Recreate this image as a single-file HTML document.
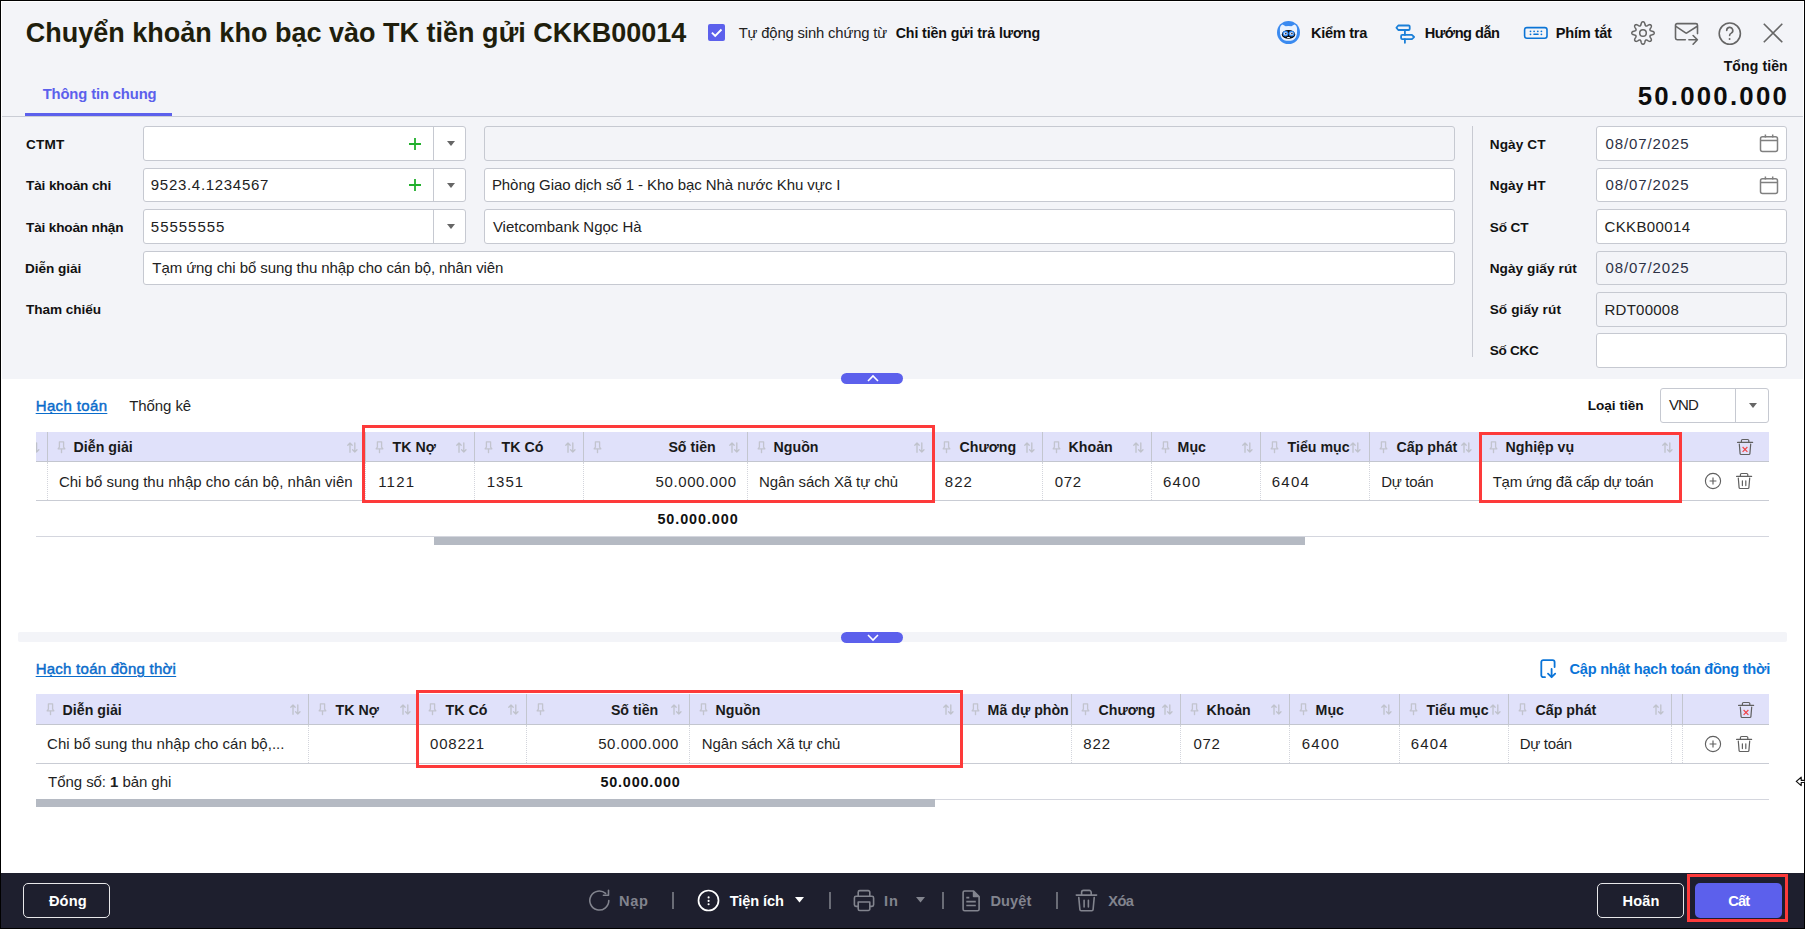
<!DOCTYPE html>
<html><head><meta charset="utf-8"><title>Chuyển khoản kho bạc</title>
<style>
html,body{margin:0;padding:0;width:1805px;height:929px;overflow:hidden;background:#000}
body{position:relative;font-family:"Liberation Sans", sans-serif}
.t{position:absolute;white-space:nowrap;font-family:"Liberation Sans", sans-serif}
svg{overflow:visible}
</style></head><body>
<div style="position:absolute;left:0px;top:0px;width:1805px;height:929px;background:#000"></div>
<div style="position:absolute;left:1px;top:1px;width:1803px;height:927px;background:#fff"></div>
<div style="position:absolute;left:2px;top:2px;width:1801px;height:377px;background:#f3f4f8"></div>
<div class="t" style="left:25.70px;top:18px;font-size:27px;line-height:30px;font-weight:bold;color:#201e0c;letter-spacing:0.011px;">Chuyển khoản kho bạc vào TK tiền gửi CKKB00014</div>
<div style="position:absolute;left:708px;top:24px;width:17px;height:17px;background:#5c60ec;border-radius:2px"></div>
<svg style="position:absolute;left:708px;top:24px" width="17" height="17" viewBox="0 0 17 17"><path d="M3.9 8.6 L7.2 11.9 L13.5 5.5" fill="none" stroke="#fff" stroke-width="1.9"/></svg>
<div class="t" style="left:738.70px;top:18px;font-size:14.8px;line-height:30px;font-weight:normal;color:#222;letter-spacing:-0.150px;">Tự động sinh chứng từ</div>
<div class="t" style="left:895.70px;top:18px;font-size:14.2px;line-height:30px;font-weight:bold;color:#111;letter-spacing:-0.095px;">Chi tiền gửi trả lương</div>
<svg style="position:absolute;left:1277px;top:21px" width="23" height="23" viewBox="0 0 23 23"><circle cx="11.5" cy="11.5" r="11.5" fill="#3a8af0"/><path d="M2.9 10 Q2.6 4.2 5.6 3.6 L8.6 5.3 Q11.5 4.7 14.4 5.3 L17.4 3.6 Q20.4 4.2 20.1 10 Q20.3 16.8 15.8 19.2 Q11.5 20.4 7.2 19.2 Q2.7 16.8 2.9 10 Z" fill="#e9f2fe"/><ellipse cx="11.5" cy="13.4" rx="6.7" ry="4.4" fill="#0a0a0a"/><circle cx="8.5" cy="12.6" r="2.9" fill="#2d86f2"/><circle cx="14.6" cy="12.6" r="2.9" fill="#2d86f2"/><circle cx="8.5" cy="12.6" r="1.7" fill="#dfe8f5"/><circle cx="14.6" cy="12.6" r="1.7" fill="#dfe8f5"/><circle cx="8.8" cy="12.6" r="0.8" fill="#1a1a2a"/><circle cx="14.9" cy="12.6" r="0.8" fill="#1a1a2a"/><path d="M10.2 15.9 h2.6 v1.1 h-2.6z" fill="#fff"/></svg>
<div class="t" style="left:1310.90px;top:18px;font-size:14.6px;line-height:30px;font-weight:bold;color:#111;letter-spacing:-0.271px;">Kiểm tra</div>
<svg style="position:absolute;left:1394px;top:23px" width="22" height="22" viewBox="0 0 22 22"><g fill="none" stroke="#1a7fd8" stroke-width="1.8" stroke-linejoin="round" stroke-linecap="round"><path d="M4.3 2.5 H14.6 a1.1 1.1 0 0 1 1.1 1.1 V5.9 a1.1 1.1 0 0 1-1.1 1.1 H4.3 L2.4 4.75 Z"/><path d="M8.2 11.9 H17.9 L20.1 14 L17.9 16.1 H8.2 a1.1 1.1 0 0 1-1.1-1.1 V13 a1.1 1.1 0 0 1 1.1-1.1 Z"/><path d="M10.9 7 V11.9 M10.9 16.1 V19.8"/></g></svg>
<div class="t" style="left:1424.70px;top:18px;font-size:14.6px;line-height:30px;font-weight:bold;color:#111;letter-spacing:-0.500px;">Hướng dẫn</div>
<svg style="position:absolute;left:1523px;top:26px" width="26" height="14" viewBox="0 0 26 14"><rect x="1.6" y="1.6" width="22.4" height="10.6" rx="2.2" fill="none" stroke="#0b74d6" stroke-width="1.6"/><g fill="#0b74d6"><circle cx="7.5" cy="5.3" r="0.9"/><circle cx="11.1" cy="5.3" r="0.9"/><circle cx="14.8" cy="5.3" r="0.9"/><circle cx="18.4" cy="5.3" r="0.9"/><circle cx="7.5" cy="8.3" r="0.9"/><circle cx="18.4" cy="8.3" r="0.9"/><rect x="10.2" y="7.5" width="5.6" height="1.6" rx="0.8"/></g></svg>
<div class="t" style="left:1555.70px;top:18px;font-size:14.6px;line-height:30px;font-weight:bold;color:#111;letter-spacing:-0.186px;">Phím tắt</div>
<svg style="position:absolute;left:1629.8px;top:20.4px" width="26" height="26" viewBox="0 0 26 26"><g fill="none" stroke="#666" stroke-width="1.5" stroke-linejoin="round"><path d="M13.00 1.80 L13.44 1.85 L13.86 2.03 L14.26 2.39 L14.59 2.99 L14.83 3.78 L15.02 4.58 L15.20 5.19 L15.41 5.58 L15.65 5.83 L15.91 5.98 L16.20 6.06 L16.54 6.05 L16.97 5.92 L17.53 5.61 L18.22 5.18 L18.96 4.80 L19.61 4.61 L20.14 4.64 L20.57 4.81 L20.92 5.08 L21.19 5.43 L21.36 5.86 L21.39 6.39 L21.20 7.04 L20.82 7.78 L20.39 8.47 L20.08 9.03 L19.95 9.46 L19.94 9.80 L20.02 10.09 L20.17 10.35 L20.42 10.59 L20.81 10.80 L21.42 10.98 L22.22 11.17 L23.01 11.41 L23.61 11.74 L23.97 12.14 L24.15 12.56 L24.20 13.00 L24.15 13.44 L23.97 13.86 L23.61 14.26 L23.01 14.59 L22.22 14.83 L21.42 15.02 L20.81 15.20 L20.42 15.41 L20.17 15.65 L20.02 15.91 L19.94 16.20 L19.95 16.54 L20.08 16.97 L20.39 17.53 L20.82 18.22 L21.20 18.96 L21.39 19.61 L21.36 20.14 L21.19 20.57 L20.92 20.92 L20.57 21.19 L20.14 21.36 L19.61 21.39 L18.96 21.20 L18.22 20.82 L17.53 20.39 L16.97 20.08 L16.54 19.95 L16.20 19.94 L15.91 20.02 L15.65 20.17 L15.41 20.42 L15.20 20.81 L15.02 21.42 L14.83 22.22 L14.59 23.01 L14.26 23.61 L13.86 23.97 L13.44 24.15 L13.00 24.20 L12.56 24.15 L12.14 23.97 L11.74 23.61 L11.41 23.01 L11.17 22.22 L10.98 21.42 L10.80 20.81 L10.59 20.42 L10.35 20.17 L10.09 20.02 L9.80 19.94 L9.46 19.95 L9.03 20.08 L8.47 20.39 L7.78 20.82 L7.04 21.20 L6.39 21.39 L5.86 21.36 L5.43 21.19 L5.08 20.92 L4.81 20.57 L4.64 20.14 L4.61 19.61 L4.80 18.96 L5.18 18.22 L5.61 17.53 L5.92 16.97 L6.05 16.54 L6.06 16.20 L5.98 15.91 L5.83 15.65 L5.58 15.41 L5.19 15.20 L4.58 15.02 L3.78 14.83 L2.99 14.59 L2.39 14.26 L2.03 13.86 L1.85 13.44 L1.80 13.00 L1.85 12.56 L2.03 12.14 L2.39 11.74 L2.99 11.41 L3.78 11.17 L4.58 10.98 L5.19 10.80 L5.58 10.59 L5.83 10.35 L5.98 10.09 L6.06 9.80 L6.05 9.46 L5.92 9.03 L5.61 8.47 L5.18 7.78 L4.80 7.04 L4.61 6.39 L4.64 5.86 L4.81 5.43 L5.08 5.08 L5.43 4.81 L5.86 4.64 L6.39 4.61 L7.04 4.80 L7.78 5.18 L8.47 5.61 L9.03 5.92 L9.46 6.05 L9.80 6.06 L10.09 5.98 L10.35 5.83 L10.59 5.58 L10.80 5.19 L10.98 4.58 L11.17 3.78 L11.41 2.99 L11.74 2.39 L12.14 2.03 L12.56 1.85Z"/><circle cx="13" cy="13" r="3.3"/></g></svg>
<svg style="position:absolute;left:1673px;top:21px" width="27" height="25" viewBox="0 0 27 25"><g fill="none" stroke="#666" stroke-width="1.6" stroke-linecap="round" stroke-linejoin="round"><path d="M12.3 18.7 H4.1 a1.6 1.6 0 0 1-1.6-1.6 V4.2 a1.6 1.6 0 0 1 1.6-1.6 H22.9 a1.6 1.6 0 0 1 1.6 1.6 V12.6"/><path d="M2.9 5.4 L12.6 11.9 a1.2 1.2 0 0 0 1.3 0 L23.9 5.5"/><path d="M15.9 18.7 H24.4 M20.1 14.5 L24.4 18.7 L20.1 23.2"/></g></svg>
<svg style="position:absolute;left:1717px;top:21px" width="26" height="26" viewBox="0 0 26 26"><g fill="none" stroke="#666" stroke-width="1.6" stroke-linecap="round"><circle cx="12.8" cy="12.6" r="10.6"/><path d="M9.7 9.4 a3.05 3.05 0 1 1 4.5 2.7 c-0.9 0.45-1.5 1.1-1.6 2.3"/></g><circle cx="12.6" cy="18" r="0.95" fill="#666"/></svg>
<svg style="position:absolute;left:1762px;top:22px" width="22" height="22" viewBox="0 0 22 22"><path d="M1.8 1.8 L20.3 20.3 M20.3 1.8 L1.8 20.3" stroke="#666" stroke-width="1.6" fill="none"/></svg>
<div class="t" style="left:1723.70px;top:51px;font-size:14px;line-height:30px;font-weight:bold;color:#111;letter-spacing:0.125px;">Tổng tiền</div>
<div class="t" style="left:1637.70px;top:81px;font-size:25.8px;line-height:30px;font-weight:bold;color:#0d0d0d;letter-spacing:2.222px;">50.000.000</div>
<div class="t" style="left:42.70px;top:79px;font-size:14.8px;line-height:30px;font-weight:bold;color:#5c60ec;letter-spacing:-0.143px;">Thông tin chung</div>
<div style="position:absolute;left:25px;top:113px;width:147px;height:3px;background:#5c60ec"></div>
<div style="position:absolute;left:2px;top:116px;width:1801px;height:1px;background:#cacdd5"></div>
<div class="t" style="left:26.00px;top:130px;font-size:13.6px;line-height:30px;font-weight:bold;color:#111;letter-spacing:0.167px;">CTMT</div>
<div class="t" style="left:26.00px;top:171px;font-size:13.6px;line-height:30px;font-weight:bold;color:#111;letter-spacing:-0.133px;">Tài khoản chi</div>
<div class="t" style="left:26.00px;top:213px;font-size:13.6px;line-height:30px;font-weight:bold;color:#111;letter-spacing:-0.169px;">Tài khoản nhận</div>
<div class="t" style="left:25.00px;top:254px;font-size:13.6px;line-height:30px;font-weight:bold;color:#111;letter-spacing:-0.050px;">Diễn giải</div>
<div class="t" style="left:26.00px;top:295px;font-size:13.6px;line-height:30px;font-weight:bold;color:#111;letter-spacing:-0.044px;">Tham chiếu</div>
<div style="position:absolute;left:143px;top:126px;width:323px;height:35px;box-sizing:border-box;border:1px solid #c6c9d1;border-radius:3px;background:#fff"></div>
<div style="position:absolute;left:433px;top:127px;width:1px;height:33px;background:#c6c9d1"></div>
<svg style="position:absolute;left:409px;top:138px" width="12" height="12" viewBox="0 0 12 12"><path d="M6 0 V12 M0 6 H12" stroke="#22b02d" stroke-width="1.8"/></svg>
<svg style="position:absolute;left:446.5px;top:141.0px" width="8" height="5" viewBox="0 0 8 5"><path d="M0 0 H8 L4.0 5Z" fill="#666"/></svg>
<div style="position:absolute;left:484px;top:126px;width:971px;height:35px;box-sizing:border-box;border:1px solid #c6c9d1;border-radius:3px;background:#f3f4f8"></div>
<div style="position:absolute;left:143px;top:168px;width:323px;height:34px;box-sizing:border-box;border:1px solid #c6c9d1;border-radius:3px;background:#fff"></div>
<div style="position:absolute;left:433px;top:169px;width:1px;height:32px;background:#c6c9d1"></div>
<svg style="position:absolute;left:409px;top:179px" width="12" height="12" viewBox="0 0 12 12"><path d="M6 0 V12 M0 6 H12" stroke="#22b02d" stroke-width="1.8"/></svg>
<svg style="position:absolute;left:446.5px;top:182.5px" width="8" height="5" viewBox="0 0 8 5"><path d="M0 0 H8 L4.0 5Z" fill="#666"/></svg>
<div class="t" style="left:150.80px;top:170px;font-size:15px;line-height:30px;font-weight:normal;color:#222;letter-spacing:0.700px;">9523.4.1234567</div>
<div style="position:absolute;left:484px;top:168px;width:971px;height:34px;box-sizing:border-box;border:1px solid #c6c9d1;border-radius:3px;background:#fff"></div>
<div class="t" style="left:491.90px;top:170px;font-size:15px;line-height:30px;font-weight:normal;color:#222;letter-spacing:-0.067px;">Phòng Giao dịch số 1 - Kho bạc Nhà nước Khu vực I</div>
<div style="position:absolute;left:143px;top:209px;width:323px;height:35px;box-sizing:border-box;border:1px solid #c6c9d1;border-radius:3px;background:#fff"></div>
<div style="position:absolute;left:433px;top:210px;width:1px;height:33px;background:#c6c9d1"></div>
<svg style="position:absolute;left:446.5px;top:224.0px" width="8" height="5" viewBox="0 0 8 5"><path d="M0 0 H8 L4.0 5Z" fill="#666"/></svg>
<div class="t" style="left:150.80px;top:212px;font-size:15px;line-height:30px;font-weight:normal;color:#222;letter-spacing:0.986px;">55555555</div>
<div style="position:absolute;left:484px;top:209px;width:971px;height:35px;box-sizing:border-box;border:1px solid #c6c9d1;border-radius:3px;background:#fff"></div>
<div class="t" style="left:492.90px;top:212px;font-size:15px;line-height:30px;font-weight:normal;color:#222;letter-spacing:-0.011px;">Vietcombank Ngọc Hà</div>
<div style="position:absolute;left:143px;top:251px;width:1312px;height:34px;box-sizing:border-box;border:1px solid #c6c9d1;border-radius:3px;background:#fff"></div>
<div class="t" style="left:152.30px;top:253px;font-size:15px;line-height:30px;font-weight:normal;color:#222;letter-spacing:-0.084px;">Tạm ứng chi bổ sung thu nhập cho cán bộ, nhân viên</div>
<div style="position:absolute;left:1472px;top:126px;width:1px;height:231px;background:#c8cad2"></div>
<div class="t" style="left:1489.70px;top:130px;font-size:13.6px;line-height:30px;font-weight:bold;color:#111;letter-spacing:0.133px;">Ngày CT</div>
<div style="position:absolute;left:1596px;top:126px;width:191px;height:35px;box-sizing:border-box;border:1px solid #c6c9d1;border-radius:3px;background:#fff"></div>
<div class="t" style="left:1605.50px;top:129px;font-size:15px;line-height:30px;font-weight:normal;color:#2c3145;letter-spacing:0.900px;">08/07/2025</div>
<svg style="position:absolute;left:1759px;top:133.8px" width="20" height="19" viewBox="0 0 20 19"><g fill="none" stroke="#808080" stroke-width="1.5"><rect x="1.5" y="2.8" width="17" height="14.8" rx="2"/><path d="M1.5 6.6 H18.5 M6.4 0.6 V3.6 M13.7 0.6 V3.6"/></g></svg>
<div class="t" style="left:1489.70px;top:171px;font-size:13.6px;line-height:30px;font-weight:bold;color:#111;letter-spacing:0.133px;">Ngày HT</div>
<div style="position:absolute;left:1596px;top:168px;width:191px;height:34px;box-sizing:border-box;border:1px solid #c6c9d1;border-radius:3px;background:#fff"></div>
<div class="t" style="left:1605.50px;top:170px;font-size:15px;line-height:30px;font-weight:normal;color:#2c3145;letter-spacing:0.900px;">08/07/2025</div>
<svg style="position:absolute;left:1759px;top:175.8px" width="20" height="19" viewBox="0 0 20 19"><g fill="none" stroke="#808080" stroke-width="1.5"><rect x="1.5" y="2.8" width="17" height="14.8" rx="2"/><path d="M1.5 6.6 H18.5 M6.4 0.6 V3.6 M13.7 0.6 V3.6"/></g></svg>
<div class="t" style="left:1489.70px;top:213px;font-size:13.6px;line-height:30px;font-weight:bold;color:#111;letter-spacing:-0.100px;">Số CT</div>
<div style="position:absolute;left:1596px;top:209px;width:191px;height:35px;box-sizing:border-box;border:1px solid #c6c9d1;border-radius:3px;background:#fff"></div>
<div class="t" style="left:1604.50px;top:212px;font-size:15px;line-height:30px;font-weight:normal;color:#222;letter-spacing:0.375px;">CKKB00014</div>
<div class="t" style="left:1489.70px;top:254px;font-size:13.6px;line-height:30px;font-weight:bold;color:#111;letter-spacing:0.083px;">Ngày giấy rút</div>
<div style="position:absolute;left:1596px;top:251px;width:191px;height:34px;box-sizing:border-box;border:1px solid #c6c9d1;border-radius:3px;background:#f3f4f8"></div>
<div class="t" style="left:1605.50px;top:253px;font-size:15px;line-height:30px;font-weight:normal;color:#2c3145;letter-spacing:0.900px;">08/07/2025</div>
<div class="t" style="left:1489.70px;top:295px;font-size:13.6px;line-height:30px;font-weight:bold;color:#111;letter-spacing:0.100px;">Số giấy rút</div>
<div style="position:absolute;left:1596px;top:292px;width:191px;height:35px;box-sizing:border-box;border:1px solid #c6c9d1;border-radius:3px;background:#f3f4f8"></div>
<div class="t" style="left:1604.50px;top:295px;font-size:15px;line-height:30px;font-weight:normal;color:#222;letter-spacing:0.243px;">RDT00008</div>
<div class="t" style="left:1489.70px;top:336px;font-size:13.6px;line-height:30px;font-weight:bold;color:#111;letter-spacing:-0.280px;">Số CKC</div>
<div style="position:absolute;left:1596px;top:333px;width:191px;height:35px;box-sizing:border-box;border:1px solid #c6c9d1;border-radius:3px;background:#fff"></div>
<div style="position:absolute;left:841px;top:373px;width:62px;height:11px;background:#5c60ec;border-radius:5.5px"></div>
<svg style="position:absolute;left:866px;top:374px" width="14" height="9" viewBox="0 0 14 9"><path d="M2 7 L7 2 L12 7" fill="none" stroke="#fff" stroke-width="1.6"/></svg>
<div class="t" style="left:35.70px;top:391px;font-size:15px;line-height:30px;font-weight:normal;color:#0a6ccb;letter-spacing:0.363px;text-decoration:underline;text-underline-offset:2px;text-decoration-thickness:1.2px;-webkit-text-stroke:0.45px #0a6ccb">Hạch toán</div>
<div class="t" style="left:129.30px;top:391px;font-size:15px;line-height:30px;font-weight:normal;color:#1f1f1f;letter-spacing:-0.100px;">Thống kê</div>
<div class="t" style="left:1587.70px;top:391px;font-size:13.6px;line-height:30px;font-weight:bold;color:#111;letter-spacing:0.000px;">Loại tiền</div>
<div style="position:absolute;left:1660px;top:388px;width:109px;height:35px;box-sizing:border-box;border:1px solid #c6c9d1;border-radius:3px;background:#fff"></div>
<div style="position:absolute;left:1735px;top:389px;width:1px;height:33px;background:#c6c9d1"></div>
<svg style="position:absolute;left:1748.5px;top:403.0px" width="8" height="5" viewBox="0 0 8 5"><path d="M0 0 H8 L4.0 5Z" fill="#666"/></svg>
<div class="t" style="left:1668.90px;top:390px;font-size:15px;line-height:30px;font-weight:normal;color:#222;letter-spacing:-0.900px;">VND</div>
<div style="position:absolute;left:36px;top:432px;width:1733px;height:29px;background:#e0e1fa"></div>
<div style="position:absolute;left:36px;top:461px;width:1733px;height:1px;background:#c3c6cf"></div>
<div style="position:absolute;left:36px;top:500px;width:1733px;height:1px;background:#c9ccd4"></div>
<div style="position:absolute;left:47px;top:432px;width:1px;height:29px;background:#c3c6cf"></div>
<div style="position:absolute;left:47px;top:462px;width:0;height:38px;border-left:1px dotted #d3d5dc"></div>
<svg style="position:absolute;left:56.5px;top:441px" width="9" height="13" viewBox="0 0 9 13"><g fill="none" stroke="#c2c4ce" stroke-width="1.3" stroke-linejoin="round"><path d="M2.4 0.8 H6.6 V6.2 L7.9 7.8 H1.1 L2.4 6.2 Z"/><path d="M4.5 7.8 V12.2"/></g></svg>
<svg style="position:absolute;left:347px;top:442px" width="11" height="11" viewBox="0 0 11 11"><g fill="none" stroke="#bfc2cb" stroke-width="1.3" stroke-linecap="round" stroke-linejoin="round"><path d="M3 10.3 V1 M0.8 3.2 L3 1 L5.2 3.2"/><path d="M7.8 0.8 V10 M5.6 7.8 L7.8 10 L10 7.8"/></g></svg>
<div class="t" style="left:73.60px;top:432px;font-size:14.2px;line-height:30px;font-weight:bold;color:#1a1a1a;letter-spacing:0.000px;">Diễn giải</div>
<div class="t" style="left:58.90px;top:467px;font-size:15px;line-height:30px;font-weight:normal;color:#1f1f1f;letter-spacing:0.005px;">Chi bổ sung thu nhập cho cán bộ, nhân viên</div>
<div style="position:absolute;left:365px;top:432px;width:1px;height:29px;background:#c3c6cf"></div>
<div style="position:absolute;left:365px;top:462px;width:0;height:38px;border-left:1px dotted #d3d5dc"></div>
<svg style="position:absolute;left:374.5px;top:441px" width="9" height="13" viewBox="0 0 9 13"><g fill="none" stroke="#c2c4ce" stroke-width="1.3" stroke-linejoin="round"><path d="M2.4 0.8 H6.6 V6.2 L7.9 7.8 H1.1 L2.4 6.2 Z"/><path d="M4.5 7.8 V12.2"/></g></svg>
<svg style="position:absolute;left:456px;top:442px" width="11" height="11" viewBox="0 0 11 11"><g fill="none" stroke="#bfc2cb" stroke-width="1.3" stroke-linecap="round" stroke-linejoin="round"><path d="M3 10.3 V1 M0.8 3.2 L3 1 L5.2 3.2"/><path d="M7.8 0.8 V10 M5.6 7.8 L7.8 10 L10 7.8"/></g></svg>
<div class="t" style="left:392.60px;top:432px;font-size:14.2px;line-height:30px;font-weight:bold;color:#1a1a1a;letter-spacing:0.000px;">TK Nợ</div>
<div class="t" style="left:378.20px;top:467px;font-size:15px;line-height:30px;font-weight:normal;color:#1f1f1f;letter-spacing:1.200px;">1121</div>
<div style="position:absolute;left:474px;top:432px;width:1px;height:29px;background:#c3c6cf"></div>
<div style="position:absolute;left:474px;top:462px;width:0;height:38px;border-left:1px dotted #d3d5dc"></div>
<svg style="position:absolute;left:483.5px;top:441px" width="9" height="13" viewBox="0 0 9 13"><g fill="none" stroke="#c2c4ce" stroke-width="1.3" stroke-linejoin="round"><path d="M2.4 0.8 H6.6 V6.2 L7.9 7.8 H1.1 L2.4 6.2 Z"/><path d="M4.5 7.8 V12.2"/></g></svg>
<svg style="position:absolute;left:565px;top:442px" width="11" height="11" viewBox="0 0 11 11"><g fill="none" stroke="#bfc2cb" stroke-width="1.3" stroke-linecap="round" stroke-linejoin="round"><path d="M3 10.3 V1 M0.8 3.2 L3 1 L5.2 3.2"/><path d="M7.8 0.8 V10 M5.6 7.8 L7.8 10 L10 7.8"/></g></svg>
<div class="t" style="left:501.60px;top:432px;font-size:14.2px;line-height:30px;font-weight:bold;color:#1a1a1a;letter-spacing:0.000px;">TK Có</div>
<div class="t" style="left:486.70px;top:467px;font-size:15px;line-height:30px;font-weight:normal;color:#1f1f1f;letter-spacing:1.033px;">1351</div>
<div style="position:absolute;left:583px;top:432px;width:1px;height:29px;background:#c3c6cf"></div>
<div style="position:absolute;left:583px;top:462px;width:0;height:38px;border-left:1px dotted #d3d5dc"></div>
<svg style="position:absolute;left:592.5px;top:441px" width="9" height="13" viewBox="0 0 9 13"><g fill="none" stroke="#c2c4ce" stroke-width="1.3" stroke-linejoin="round"><path d="M2.4 0.8 H6.6 V6.2 L7.9 7.8 H1.1 L2.4 6.2 Z"/><path d="M4.5 7.8 V12.2"/></g></svg>
<svg style="position:absolute;left:729px;top:442px" width="11" height="11" viewBox="0 0 11 11"><g fill="none" stroke="#bfc2cb" stroke-width="1.3" stroke-linecap="round" stroke-linejoin="round"><path d="M3 10.3 V1 M0.8 3.2 L3 1 L5.2 3.2"/><path d="M7.8 0.8 V10 M5.6 7.8 L7.8 10 L10 7.8"/></g></svg>
<div class="t" style="left:668.40px;top:432px;font-size:14.2px;line-height:30px;font-weight:bold;color:#1a1a1a;letter-spacing:0.000px;">Số tiền</div>
<div class="t" style="left:655.50px;top:467px;font-size:15px;line-height:30px;font-weight:normal;color:#1f1f1f;letter-spacing:0.611px;">50.000.000</div>
<div style="position:absolute;left:747px;top:432px;width:1px;height:29px;background:#c3c6cf"></div>
<div style="position:absolute;left:747px;top:462px;width:0;height:38px;border-left:1px dotted #d3d5dc"></div>
<svg style="position:absolute;left:756.5px;top:441px" width="9" height="13" viewBox="0 0 9 13"><g fill="none" stroke="#c2c4ce" stroke-width="1.3" stroke-linejoin="round"><path d="M2.4 0.8 H6.6 V6.2 L7.9 7.8 H1.1 L2.4 6.2 Z"/><path d="M4.5 7.8 V12.2"/></g></svg>
<svg style="position:absolute;left:914px;top:442px" width="11" height="11" viewBox="0 0 11 11"><g fill="none" stroke="#bfc2cb" stroke-width="1.3" stroke-linecap="round" stroke-linejoin="round"><path d="M3 10.3 V1 M0.8 3.2 L3 1 L5.2 3.2"/><path d="M7.8 0.8 V10 M5.6 7.8 L7.8 10 L10 7.8"/></g></svg>
<div class="t" style="left:773.60px;top:432px;font-size:14.2px;line-height:30px;font-weight:bold;color:#1a1a1a;letter-spacing:0.000px;">Nguồn</div>
<div class="t" style="left:759.10px;top:467px;font-size:15px;line-height:30px;font-weight:normal;color:#1f1f1f;letter-spacing:-0.106px;">Ngân sách Xã tự chủ</div>
<div style="position:absolute;left:932px;top:432px;width:1px;height:29px;background:#c3c6cf"></div>
<div style="position:absolute;left:932px;top:462px;width:0;height:38px;border-left:1px dotted #d3d5dc"></div>
<svg style="position:absolute;left:941.5px;top:441px" width="9" height="13" viewBox="0 0 9 13"><g fill="none" stroke="#c2c4ce" stroke-width="1.3" stroke-linejoin="round"><path d="M2.4 0.8 H6.6 V6.2 L7.9 7.8 H1.1 L2.4 6.2 Z"/><path d="M4.5 7.8 V12.2"/></g></svg>
<svg style="position:absolute;left:1024px;top:442px" width="11" height="11" viewBox="0 0 11 11"><g fill="none" stroke="#bfc2cb" stroke-width="1.3" stroke-linecap="round" stroke-linejoin="round"><path d="M3 10.3 V1 M0.8 3.2 L3 1 L5.2 3.2"/><path d="M7.8 0.8 V10 M5.6 7.8 L7.8 10 L10 7.8"/></g></svg>
<div class="t" style="left:959.60px;top:432px;font-size:14.2px;line-height:30px;font-weight:bold;color:#1a1a1a;letter-spacing:0.000px;">Chương</div>
<div class="t" style="left:944.80px;top:467px;font-size:15px;line-height:30px;font-weight:normal;color:#1f1f1f;letter-spacing:1.000px;">822</div>
<div style="position:absolute;left:1042px;top:432px;width:1px;height:29px;background:#c3c6cf"></div>
<div style="position:absolute;left:1042px;top:462px;width:0;height:38px;border-left:1px dotted #d3d5dc"></div>
<svg style="position:absolute;left:1051.5px;top:441px" width="9" height="13" viewBox="0 0 9 13"><g fill="none" stroke="#c2c4ce" stroke-width="1.3" stroke-linejoin="round"><path d="M2.4 0.8 H6.6 V6.2 L7.9 7.8 H1.1 L2.4 6.2 Z"/><path d="M4.5 7.8 V12.2"/></g></svg>
<svg style="position:absolute;left:1133px;top:442px" width="11" height="11" viewBox="0 0 11 11"><g fill="none" stroke="#bfc2cb" stroke-width="1.3" stroke-linecap="round" stroke-linejoin="round"><path d="M3 10.3 V1 M0.8 3.2 L3 1 L5.2 3.2"/><path d="M7.8 0.8 V10 M5.6 7.8 L7.8 10 L10 7.8"/></g></svg>
<div class="t" style="left:1068.60px;top:432px;font-size:14.2px;line-height:30px;font-weight:bold;color:#1a1a1a;letter-spacing:0.000px;">Khoản</div>
<div class="t" style="left:1054.80px;top:467px;font-size:15px;line-height:30px;font-weight:normal;color:#1f1f1f;letter-spacing:0.650px;">072</div>
<div style="position:absolute;left:1151px;top:432px;width:1px;height:29px;background:#c3c6cf"></div>
<div style="position:absolute;left:1151px;top:462px;width:0;height:38px;border-left:1px dotted #d3d5dc"></div>
<svg style="position:absolute;left:1160.5px;top:441px" width="9" height="13" viewBox="0 0 9 13"><g fill="none" stroke="#c2c4ce" stroke-width="1.3" stroke-linejoin="round"><path d="M2.4 0.8 H6.6 V6.2 L7.9 7.8 H1.1 L2.4 6.2 Z"/><path d="M4.5 7.8 V12.2"/></g></svg>
<svg style="position:absolute;left:1242px;top:442px" width="11" height="11" viewBox="0 0 11 11"><g fill="none" stroke="#bfc2cb" stroke-width="1.3" stroke-linecap="round" stroke-linejoin="round"><path d="M3 10.3 V1 M0.8 3.2 L3 1 L5.2 3.2"/><path d="M7.8 0.8 V10 M5.6 7.8 L7.8 10 L10 7.8"/></g></svg>
<div class="t" style="left:1177.60px;top:432px;font-size:14.2px;line-height:30px;font-weight:bold;color:#1a1a1a;letter-spacing:0.000px;">Mục</div>
<div class="t" style="left:1162.90px;top:467px;font-size:15px;line-height:30px;font-weight:normal;color:#1f1f1f;letter-spacing:1.300px;">6400</div>
<div style="position:absolute;left:1260px;top:432px;width:1px;height:29px;background:#c3c6cf"></div>
<div style="position:absolute;left:1260px;top:462px;width:0;height:38px;border-left:1px dotted #d3d5dc"></div>
<svg style="position:absolute;left:1269.5px;top:441px" width="9" height="13" viewBox="0 0 9 13"><g fill="none" stroke="#c2c4ce" stroke-width="1.3" stroke-linejoin="round"><path d="M2.4 0.8 H6.6 V6.2 L7.9 7.8 H1.1 L2.4 6.2 Z"/><path d="M4.5 7.8 V12.2"/></g></svg>
<svg style="position:absolute;left:1350px;top:442px" width="11" height="11" viewBox="0 0 11 11"><g fill="none" stroke="#bfc2cb" stroke-width="1.3" stroke-linecap="round" stroke-linejoin="round"><path d="M3 10.3 V1 M0.8 3.2 L3 1 L5.2 3.2"/><path d="M7.8 0.8 V10 M5.6 7.8 L7.8 10 L10 7.8"/></g></svg>
<div class="t" style="left:1287.60px;top:432px;font-size:14.2px;line-height:30px;font-weight:bold;color:#1a1a1a;letter-spacing:0.000px;">Tiểu mục</div>
<div class="t" style="left:1271.80px;top:467px;font-size:15px;line-height:30px;font-weight:normal;color:#1f1f1f;letter-spacing:1.200px;">6404</div>
<div style="position:absolute;left:1369px;top:432px;width:1px;height:29px;background:#c3c6cf"></div>
<div style="position:absolute;left:1369px;top:462px;width:0;height:38px;border-left:1px dotted #d3d5dc"></div>
<svg style="position:absolute;left:1378.5px;top:441px" width="9" height="13" viewBox="0 0 9 13"><g fill="none" stroke="#c2c4ce" stroke-width="1.3" stroke-linejoin="round"><path d="M2.4 0.8 H6.6 V6.2 L7.9 7.8 H1.1 L2.4 6.2 Z"/><path d="M4.5 7.8 V12.2"/></g></svg>
<svg style="position:absolute;left:1461px;top:442px" width="11" height="11" viewBox="0 0 11 11"><g fill="none" stroke="#bfc2cb" stroke-width="1.3" stroke-linecap="round" stroke-linejoin="round"><path d="M3 10.3 V1 M0.8 3.2 L3 1 L5.2 3.2"/><path d="M7.8 0.8 V10 M5.6 7.8 L7.8 10 L10 7.8"/></g></svg>
<div class="t" style="left:1396.60px;top:432px;font-size:14.2px;line-height:30px;font-weight:bold;color:#1a1a1a;letter-spacing:0.000px;">Cấp phát</div>
<div class="t" style="left:1381.20px;top:467px;font-size:15px;line-height:30px;font-weight:normal;color:#1f1f1f;letter-spacing:-0.317px;">Dự toán</div>
<div style="position:absolute;left:1479px;top:432px;width:1px;height:29px;background:#c3c6cf"></div>
<div style="position:absolute;left:1479px;top:462px;width:0;height:38px;border-left:1px dotted #d3d5dc"></div>
<svg style="position:absolute;left:1488.5px;top:441px" width="9" height="13" viewBox="0 0 9 13"><g fill="none" stroke="#c2c4ce" stroke-width="1.3" stroke-linejoin="round"><path d="M2.4 0.8 H6.6 V6.2 L7.9 7.8 H1.1 L2.4 6.2 Z"/><path d="M4.5 7.8 V12.2"/></g></svg>
<svg style="position:absolute;left:1662px;top:442px" width="11" height="11" viewBox="0 0 11 11"><g fill="none" stroke="#bfc2cb" stroke-width="1.3" stroke-linecap="round" stroke-linejoin="round"><path d="M3 10.3 V1 M0.8 3.2 L3 1 L5.2 3.2"/><path d="M7.8 0.8 V10 M5.6 7.8 L7.8 10 L10 7.8"/></g></svg>
<div class="t" style="left:1505.60px;top:432px;font-size:14.2px;line-height:30px;font-weight:bold;color:#1a1a1a;letter-spacing:0.000px;">Nghiệp vụ</div>
<div class="t" style="left:1492.70px;top:467px;font-size:15px;line-height:30px;font-weight:normal;color:#1f1f1f;letter-spacing:-0.238px;">Tạm ứng đã cấp dự toán</div>
<div style="position:absolute;left:1680px;top:432px;width:1px;height:29px;background:#c3c6cf"></div>
<div style="position:absolute;left:1680px;top:462px;width:0;height:38px;border-left:1px dotted #d3d5dc"></div>
<svg style="position:absolute;left:36px;top:442px;overflow:hidden" width="5" height="11" viewBox="0 0 5 11"><path d="M0.6 0.8 V10 M-1.6 7.8 L0.6 10 L2.8 7.8" fill="none" stroke="#bfc2cb" stroke-width="1.3" stroke-linecap="round" stroke-linejoin="round"/></svg>
<svg style="position:absolute;left:1737px;top:439px" width="16" height="16" viewBox="0 0 16 16"><g fill="none" stroke="#606060" stroke-width="1.2" stroke-linejoin="round" stroke-linecap="round"><path d="M0.6 3.4 H15.6"/><path d="M4.4 3.4 V1.7 a1.2 1.2 0 0 1 1.2-1.2 H10.6 a1.2 1.2 0 0 1 1.2 1.2 V3.4"/><path d="M2.3 5 L3.1 14.6 a1 1 0 0 0 1 0.9 H11.9 a1 1 0 0 0 1-0.9 L13.7 5"/></g><path d="M5.6 8 L10.4 12.8 M10.4 8 L5.6 12.8" stroke="#f0454a" stroke-width="1.2"/></svg>
<svg style="position:absolute;left:1704px;top:472px" width="18" height="18" viewBox="0 0 18 18"><g fill="none" stroke="#606060" stroke-width="1.15"><circle cx="9" cy="9" r="7.6"/><path d="M9 5.6 V12.4 M5.6 9 H12.4"/></g></svg>
<svg style="position:absolute;left:1736px;top:473px" width="16" height="16" viewBox="0 0 16 16"><g fill="none" stroke="#606060" stroke-width="1.2" stroke-linejoin="round" stroke-linecap="round"><path d="M0.6 3.4 H15.6"/><path d="M4.4 3.4 V1.7 a1.2 1.2 0 0 1 1.2-1.2 H10.6 a1.2 1.2 0 0 1 1.2 1.2 V3.4"/><path d="M2.3 5 L3.1 14.6 a1 1 0 0 0 1 0.9 H11.9 a1 1 0 0 0 1-0.9 L13.7 5"/><path d="M6.4 7.8 V12.6 M9.8 7.8 V12.6"/></g></svg>
<div class="t" style="left:657.40px;top:504px;font-size:14.4px;line-height:30px;font-weight:bold;color:#111;letter-spacing:0.922px;">50.000.000</div>
<div style="position:absolute;left:36px;top:536px;width:1733px;height:1px;background:#d4d6de"></div>
<div style="position:absolute;left:434px;top:537px;width:871px;height:8px;background:#b5bac3"></div>
<div style="position:absolute;left:362px;top:425px;width:573px;height:78px;border:3px solid #fd3a3a;box-sizing:border-box"></div>
<div style="position:absolute;left:1479px;top:432px;width:203px;height:71px;border:3px solid #fd3a3a;box-sizing:border-box"></div>
<div style="position:absolute;left:18px;top:632px;width:1769px;height:10px;background:#f3f4f8;border-radius:2px"></div>
<div style="position:absolute;left:841px;top:632px;width:62px;height:11px;background:#5c60ec;border-radius:5.5px"></div>
<svg style="position:absolute;left:866px;top:633px" width="14" height="9" viewBox="0 0 14 9"><path d="M2 2 L7 7 L12 2" fill="none" stroke="#fff" stroke-width="1.6"/></svg>
<div class="t" style="left:35.70px;top:654px;font-size:15px;line-height:30px;font-weight:normal;color:#0a6ccb;letter-spacing:0.250px;text-decoration:underline;text-underline-offset:2px;text-decoration-thickness:1.2px;-webkit-text-stroke:0.45px #0a6ccb">Hạch toán đồng thời</div>
<svg style="position:absolute;left:1539px;top:657px" width="20" height="22" viewBox="0 0 20 22"><g fill="none" stroke="#0a74d8" stroke-width="1.8" stroke-linecap="round" stroke-linejoin="round"><path d="M6 20.2 H4.3 a2 2 0 0 1-2-2 V5.1 a2 2 0 0 1 2-2 H13.6 a2 2 0 0 1 2 2 V10"/><path d="M12.6 12 V20.2 M9 16.6 L12.6 20.2 L16.2 16.6"/></g></svg>
<div class="t" style="left:1569.50px;top:654px;font-size:14.6px;line-height:30px;font-weight:bold;color:#0a74d8;letter-spacing:-0.248px;">Cập nhật hạch toán đồng thời</div>
<div style="position:absolute;left:36px;top:694px;width:1733px;height:30px;background:#e0e1fa"></div>
<div style="position:absolute;left:36px;top:724px;width:1733px;height:1px;background:#c3c6cf"></div>
<div style="position:absolute;left:36px;top:763px;width:1733px;height:1px;background:#c9ccd4"></div>
<svg style="position:absolute;left:45.5px;top:703px" width="9" height="13" viewBox="0 0 9 13"><g fill="none" stroke="#c2c4ce" stroke-width="1.3" stroke-linejoin="round"><path d="M2.4 0.8 H6.6 V6.2 L7.9 7.8 H1.1 L2.4 6.2 Z"/><path d="M4.5 7.8 V12.2"/></g></svg>
<svg style="position:absolute;left:290px;top:704px" width="11" height="11" viewBox="0 0 11 11"><g fill="none" stroke="#bfc2cb" stroke-width="1.3" stroke-linecap="round" stroke-linejoin="round"><path d="M3 10.3 V1 M0.8 3.2 L3 1 L5.2 3.2"/><path d="M7.8 0.8 V10 M5.6 7.8 L7.8 10 L10 7.8"/></g></svg>
<div class="t" style="left:62.60px;top:695px;font-size:14.2px;line-height:30px;font-weight:bold;color:#1a1a1a;letter-spacing:0.000px;">Diễn giải</div>
<div class="t" style="left:47.10px;top:729px;font-size:15px;line-height:30px;font-weight:normal;color:#1f1f1f;letter-spacing:0.015px;">Chi bổ sung thu nhập cho cán bộ,...</div>
<div style="position:absolute;left:308px;top:694px;width:1px;height:30px;background:#c3c6cf"></div>
<div style="position:absolute;left:308px;top:725px;width:0;height:38px;border-left:1px dotted #d3d5dc"></div>
<svg style="position:absolute;left:317.5px;top:703px" width="9" height="13" viewBox="0 0 9 13"><g fill="none" stroke="#c2c4ce" stroke-width="1.3" stroke-linejoin="round"><path d="M2.4 0.8 H6.6 V6.2 L7.9 7.8 H1.1 L2.4 6.2 Z"/><path d="M4.5 7.8 V12.2"/></g></svg>
<svg style="position:absolute;left:400px;top:704px" width="11" height="11" viewBox="0 0 11 11"><g fill="none" stroke="#bfc2cb" stroke-width="1.3" stroke-linecap="round" stroke-linejoin="round"><path d="M3 10.3 V1 M0.8 3.2 L3 1 L5.2 3.2"/><path d="M7.8 0.8 V10 M5.6 7.8 L7.8 10 L10 7.8"/></g></svg>
<div class="t" style="left:335.60px;top:695px;font-size:14.2px;line-height:30px;font-weight:bold;color:#1a1a1a;letter-spacing:0.000px;">TK Nợ</div>
<div style="position:absolute;left:418px;top:694px;width:1px;height:30px;background:#c3c6cf"></div>
<div style="position:absolute;left:418px;top:725px;width:0;height:38px;border-left:1px dotted #d3d5dc"></div>
<svg style="position:absolute;left:427.5px;top:703px" width="9" height="13" viewBox="0 0 9 13"><g fill="none" stroke="#c2c4ce" stroke-width="1.3" stroke-linejoin="round"><path d="M2.4 0.8 H6.6 V6.2 L7.9 7.8 H1.1 L2.4 6.2 Z"/><path d="M4.5 7.8 V12.2"/></g></svg>
<svg style="position:absolute;left:508px;top:704px" width="11" height="11" viewBox="0 0 11 11"><g fill="none" stroke="#bfc2cb" stroke-width="1.3" stroke-linecap="round" stroke-linejoin="round"><path d="M3 10.3 V1 M0.8 3.2 L3 1 L5.2 3.2"/><path d="M7.8 0.8 V10 M5.6 7.8 L7.8 10 L10 7.8"/></g></svg>
<div class="t" style="left:445.60px;top:695px;font-size:14.2px;line-height:30px;font-weight:bold;color:#1a1a1a;letter-spacing:0.000px;">TK Có</div>
<div class="t" style="left:430.00px;top:729px;font-size:15px;line-height:30px;font-weight:normal;color:#1f1f1f;letter-spacing:0.820px;">008221</div>
<div style="position:absolute;left:526px;top:694px;width:1px;height:30px;background:#c3c6cf"></div>
<div style="position:absolute;left:526px;top:725px;width:0;height:38px;border-left:1px dotted #d3d5dc"></div>
<svg style="position:absolute;left:535.5px;top:703px" width="9" height="13" viewBox="0 0 9 13"><g fill="none" stroke="#c2c4ce" stroke-width="1.3" stroke-linejoin="round"><path d="M2.4 0.8 H6.6 V6.2 L7.9 7.8 H1.1 L2.4 6.2 Z"/><path d="M4.5 7.8 V12.2"/></g></svg>
<svg style="position:absolute;left:671px;top:704px" width="11" height="11" viewBox="0 0 11 11"><g fill="none" stroke="#bfc2cb" stroke-width="1.3" stroke-linecap="round" stroke-linejoin="round"><path d="M3 10.3 V1 M0.8 3.2 L3 1 L5.2 3.2"/><path d="M7.8 0.8 V10 M5.6 7.8 L7.8 10 L10 7.8"/></g></svg>
<div class="t" style="left:610.90px;top:695px;font-size:14.2px;line-height:30px;font-weight:bold;color:#1a1a1a;letter-spacing:0.000px;">Số tiền</div>
<div class="t" style="left:598.20px;top:729px;font-size:15px;line-height:30px;font-weight:normal;color:#1f1f1f;letter-spacing:0.578px;">50.000.000</div>
<div style="position:absolute;left:689px;top:694px;width:1px;height:30px;background:#c3c6cf"></div>
<div style="position:absolute;left:689px;top:725px;width:0;height:38px;border-left:1px dotted #d3d5dc"></div>
<svg style="position:absolute;left:698.5px;top:703px" width="9" height="13" viewBox="0 0 9 13"><g fill="none" stroke="#c2c4ce" stroke-width="1.3" stroke-linejoin="round"><path d="M2.4 0.8 H6.6 V6.2 L7.9 7.8 H1.1 L2.4 6.2 Z"/><path d="M4.5 7.8 V12.2"/></g></svg>
<svg style="position:absolute;left:943px;top:704px" width="11" height="11" viewBox="0 0 11 11"><g fill="none" stroke="#bfc2cb" stroke-width="1.3" stroke-linecap="round" stroke-linejoin="round"><path d="M3 10.3 V1 M0.8 3.2 L3 1 L5.2 3.2"/><path d="M7.8 0.8 V10 M5.6 7.8 L7.8 10 L10 7.8"/></g></svg>
<div class="t" style="left:715.60px;top:695px;font-size:14.2px;line-height:30px;font-weight:bold;color:#1a1a1a;letter-spacing:0.000px;">Nguồn</div>
<div class="t" style="left:701.80px;top:729px;font-size:15px;line-height:30px;font-weight:normal;color:#1f1f1f;letter-spacing:-0.128px;">Ngân sách Xã tự chủ</div>
<div style="position:absolute;left:961px;top:694px;width:1px;height:30px;background:#c3c6cf"></div>
<div style="position:absolute;left:961px;top:725px;width:0;height:38px;border-left:1px dotted #d3d5dc"></div>
<svg style="position:absolute;left:970.5px;top:703px" width="9" height="13" viewBox="0 0 9 13"><g fill="none" stroke="#c2c4ce" stroke-width="1.3" stroke-linejoin="round"><path d="M2.4 0.8 H6.6 V6.2 L7.9 7.8 H1.1 L2.4 6.2 Z"/><path d="M4.5 7.8 V12.2"/></g></svg>
<div class="t" style="left:987.60px;top:695px;font-size:14.2px;line-height:30px;font-weight:bold;color:#1a1a1a;letter-spacing:0.000px;width:81px;overflow:hidden">Mã dự phòng</div>
<div style="position:absolute;left:1071px;top:694px;width:1px;height:30px;background:#c3c6cf"></div>
<div style="position:absolute;left:1071px;top:725px;width:0;height:38px;border-left:1px dotted #d3d5dc"></div>
<svg style="position:absolute;left:1080.5px;top:703px" width="9" height="13" viewBox="0 0 9 13"><g fill="none" stroke="#c2c4ce" stroke-width="1.3" stroke-linejoin="round"><path d="M2.4 0.8 H6.6 V6.2 L7.9 7.8 H1.1 L2.4 6.2 Z"/><path d="M4.5 7.8 V12.2"/></g></svg>
<svg style="position:absolute;left:1162px;top:704px" width="11" height="11" viewBox="0 0 11 11"><g fill="none" stroke="#bfc2cb" stroke-width="1.3" stroke-linecap="round" stroke-linejoin="round"><path d="M3 10.3 V1 M0.8 3.2 L3 1 L5.2 3.2"/><path d="M7.8 0.8 V10 M5.6 7.8 L7.8 10 L10 7.8"/></g></svg>
<div class="t" style="left:1098.60px;top:695px;font-size:14.2px;line-height:30px;font-weight:bold;color:#1a1a1a;letter-spacing:0.000px;">Chương</div>
<div class="t" style="left:1083.20px;top:729px;font-size:15px;line-height:30px;font-weight:normal;color:#1f1f1f;letter-spacing:1.000px;">822</div>
<div style="position:absolute;left:1180px;top:694px;width:1px;height:30px;background:#c3c6cf"></div>
<div style="position:absolute;left:1180px;top:725px;width:0;height:38px;border-left:1px dotted #d3d5dc"></div>
<svg style="position:absolute;left:1189.5px;top:703px" width="9" height="13" viewBox="0 0 9 13"><g fill="none" stroke="#c2c4ce" stroke-width="1.3" stroke-linejoin="round"><path d="M2.4 0.8 H6.6 V6.2 L7.9 7.8 H1.1 L2.4 6.2 Z"/><path d="M4.5 7.8 V12.2"/></g></svg>
<svg style="position:absolute;left:1271px;top:704px" width="11" height="11" viewBox="0 0 11 11"><g fill="none" stroke="#bfc2cb" stroke-width="1.3" stroke-linecap="round" stroke-linejoin="round"><path d="M3 10.3 V1 M0.8 3.2 L3 1 L5.2 3.2"/><path d="M7.8 0.8 V10 M5.6 7.8 L7.8 10 L10 7.8"/></g></svg>
<div class="t" style="left:1206.60px;top:695px;font-size:14.2px;line-height:30px;font-weight:bold;color:#1a1a1a;letter-spacing:0.000px;">Khoản</div>
<div class="t" style="left:1193.50px;top:729px;font-size:15px;line-height:30px;font-weight:normal;color:#1f1f1f;letter-spacing:0.650px;">072</div>
<div style="position:absolute;left:1289px;top:694px;width:1px;height:30px;background:#c3c6cf"></div>
<div style="position:absolute;left:1289px;top:725px;width:0;height:38px;border-left:1px dotted #d3d5dc"></div>
<svg style="position:absolute;left:1298.5px;top:703px" width="9" height="13" viewBox="0 0 9 13"><g fill="none" stroke="#c2c4ce" stroke-width="1.3" stroke-linejoin="round"><path d="M2.4 0.8 H6.6 V6.2 L7.9 7.8 H1.1 L2.4 6.2 Z"/><path d="M4.5 7.8 V12.2"/></g></svg>
<svg style="position:absolute;left:1381px;top:704px" width="11" height="11" viewBox="0 0 11 11"><g fill="none" stroke="#bfc2cb" stroke-width="1.3" stroke-linecap="round" stroke-linejoin="round"><path d="M3 10.3 V1 M0.8 3.2 L3 1 L5.2 3.2"/><path d="M7.8 0.8 V10 M5.6 7.8 L7.8 10 L10 7.8"/></g></svg>
<div class="t" style="left:1315.60px;top:695px;font-size:14.2px;line-height:30px;font-weight:bold;color:#1a1a1a;letter-spacing:0.000px;">Mục</div>
<div class="t" style="left:1301.70px;top:729px;font-size:15px;line-height:30px;font-weight:normal;color:#1f1f1f;letter-spacing:1.300px;">6400</div>
<div style="position:absolute;left:1399px;top:694px;width:1px;height:30px;background:#c3c6cf"></div>
<div style="position:absolute;left:1399px;top:725px;width:0;height:38px;border-left:1px dotted #d3d5dc"></div>
<svg style="position:absolute;left:1408.5px;top:703px" width="9" height="13" viewBox="0 0 9 13"><g fill="none" stroke="#c2c4ce" stroke-width="1.3" stroke-linejoin="round"><path d="M2.4 0.8 H6.6 V6.2 L7.9 7.8 H1.1 L2.4 6.2 Z"/><path d="M4.5 7.8 V12.2"/></g></svg>
<svg style="position:absolute;left:1490px;top:704px" width="11" height="11" viewBox="0 0 11 11"><g fill="none" stroke="#bfc2cb" stroke-width="1.3" stroke-linecap="round" stroke-linejoin="round"><path d="M3 10.3 V1 M0.8 3.2 L3 1 L5.2 3.2"/><path d="M7.8 0.8 V10 M5.6 7.8 L7.8 10 L10 7.8"/></g></svg>
<div class="t" style="left:1426.60px;top:695px;font-size:14.2px;line-height:30px;font-weight:bold;color:#1a1a1a;letter-spacing:0.000px;">Tiểu mục</div>
<div class="t" style="left:1410.70px;top:729px;font-size:15px;line-height:30px;font-weight:normal;color:#1f1f1f;letter-spacing:1.200px;">6404</div>
<div style="position:absolute;left:1508px;top:694px;width:1px;height:30px;background:#c3c6cf"></div>
<div style="position:absolute;left:1508px;top:725px;width:0;height:38px;border-left:1px dotted #d3d5dc"></div>
<svg style="position:absolute;left:1517.5px;top:703px" width="9" height="13" viewBox="0 0 9 13"><g fill="none" stroke="#c2c4ce" stroke-width="1.3" stroke-linejoin="round"><path d="M2.4 0.8 H6.6 V6.2 L7.9 7.8 H1.1 L2.4 6.2 Z"/><path d="M4.5 7.8 V12.2"/></g></svg>
<svg style="position:absolute;left:1653px;top:704px" width="11" height="11" viewBox="0 0 11 11"><g fill="none" stroke="#bfc2cb" stroke-width="1.3" stroke-linecap="round" stroke-linejoin="round"><path d="M3 10.3 V1 M0.8 3.2 L3 1 L5.2 3.2"/><path d="M7.8 0.8 V10 M5.6 7.8 L7.8 10 L10 7.8"/></g></svg>
<div class="t" style="left:1535.60px;top:695px;font-size:14.2px;line-height:30px;font-weight:bold;color:#1a1a1a;letter-spacing:0.000px;">Cấp phát</div>
<div class="t" style="left:1519.70px;top:729px;font-size:15px;line-height:30px;font-weight:normal;color:#1f1f1f;letter-spacing:-0.317px;">Dự toán</div>
<div style="position:absolute;left:1671px;top:694px;width:1px;height:30px;background:#c3c6cf"></div>
<div style="position:absolute;left:1671px;top:725px;width:0;height:38px;border-left:1px dotted #d3d5dc"></div>
<div style="position:absolute;left:1682px;top:694px;width:1px;height:30px;background:#c3c6cf"></div>
<div style="position:absolute;left:1682px;top:725px;width:0;height:38px;border-left:1px dotted #d3d5dc"></div>
<svg style="position:absolute;left:1738px;top:702px" width="16" height="16" viewBox="0 0 16 16"><g fill="none" stroke="#606060" stroke-width="1.2" stroke-linejoin="round" stroke-linecap="round"><path d="M0.6 3.4 H15.6"/><path d="M4.4 3.4 V1.7 a1.2 1.2 0 0 1 1.2-1.2 H10.6 a1.2 1.2 0 0 1 1.2 1.2 V3.4"/><path d="M2.3 5 L3.1 14.6 a1 1 0 0 0 1 0.9 H11.9 a1 1 0 0 0 1-0.9 L13.7 5"/></g><path d="M5.6 8 L10.4 12.8 M10.4 8 L5.6 12.8" stroke="#f0454a" stroke-width="1.2"/></svg>
<svg style="position:absolute;left:1704px;top:735px" width="18" height="18" viewBox="0 0 18 18"><g fill="none" stroke="#606060" stroke-width="1.15"><circle cx="9" cy="9" r="7.6"/><path d="M9 5.6 V12.4 M5.6 9 H12.4"/></g></svg>
<svg style="position:absolute;left:1736px;top:736px" width="16" height="16" viewBox="0 0 16 16"><g fill="none" stroke="#606060" stroke-width="1.2" stroke-linejoin="round" stroke-linecap="round"><path d="M0.6 3.4 H15.6"/><path d="M4.4 3.4 V1.7 a1.2 1.2 0 0 1 1.2-1.2 H10.6 a1.2 1.2 0 0 1 1.2 1.2 V3.4"/><path d="M2.3 5 L3.1 14.6 a1 1 0 0 0 1 0.9 H11.9 a1 1 0 0 0 1-0.9 L13.7 5"/><path d="M6.4 7.8 V12.6 M9.8 7.8 V12.6"/></g></svg>
<div class="t" style="left:48.10px;top:767px;font-size:15px;line-height:30px;font-weight:normal;color:#1f1f1f;letter-spacing:-0.065px;">Tổng số: <b>1</b> bản ghi</div>
<div class="t" style="left:600.40px;top:767px;font-size:14.4px;line-height:30px;font-weight:bold;color:#111;letter-spacing:0.822px;">50.000.000</div>
<div style="position:absolute;left:36px;top:799px;width:1733px;height:1px;background:#d4d6de"></div>
<div style="position:absolute;left:36px;top:799px;width:899px;height:8px;background:#b5bac3"></div>
<div style="position:absolute;left:416px;top:690px;width:547px;height:78px;border:3px solid #fd3a3a;box-sizing:border-box"></div>
<svg style="position:absolute;left:1793px;top:774px" width="12" height="14" viewBox="0 0 12 14"><path d="M3.3 7.4 L8.2 3.2 V6.3 H12 V8.5 H8.2 V11.6 Z" fill="#fff" stroke="#111" stroke-width="1.2" stroke-linejoin="round"/></svg>
<div style="position:absolute;left:1px;top:873px;width:1803px;height:55px;background:#1e1f2e"></div>
<div style="position:absolute;left:23px;top:883px;width:87px;height:35px;border:1.5px solid #e8e8ea;border-radius:5px;box-sizing:border-box"></div>
<div class="t" style="left:48.90px;top:886px;font-size:14.6px;line-height:30px;font-weight:bold;color:#fff;letter-spacing:0.167px;">Đóng</div>
<svg style="position:absolute;left:587px;top:889px" width="24" height="24" viewBox="0 0 24 24"><g fill="none" stroke="#82848e" stroke-width="1.6" stroke-linecap="round" stroke-linejoin="round"><path d="M21.8 11.6 A9.5 9.5 0 1 1 18.6 4.4"/><path d="M21.5 1.3 V6.2 H16.4"/></g></svg>
<div class="t" style="left:618.90px;top:886px;font-size:14.6px;line-height:30px;font-weight:bold;color:#82848e;letter-spacing:0.750px;">Nạp</div>
<div style="position:absolute;left:672px;top:892px;width:2px;height:17px;background:#6a6c76"></div>
<svg style="position:absolute;left:697px;top:889px" width="23" height="23" viewBox="0 0 23 23"><circle cx="11.5" cy="11.5" r="10" fill="none" stroke="#fff" stroke-width="1.7"/><g fill="#fff"><circle cx="11.6" cy="8.4" r="1.05"/><circle cx="11.6" cy="11.9" r="1.05"/><circle cx="11.6" cy="15.3" r="1.05"/></g></svg>
<div class="t" style="left:729.70px;top:886px;font-size:14.6px;line-height:30px;font-weight:bold;color:#fff;letter-spacing:-0.086px;">Tiện ích</div>
<svg style="position:absolute;left:794.7px;top:896.55px" width="9" height="5.5" viewBox="0 0 9 5.5"><path d="M0 0 H9 L4.5 5.5Z" fill="#fff"/></svg>
<div style="position:absolute;left:829px;top:892px;width:2px;height:17px;background:#6a6c76"></div>
<svg style="position:absolute;left:853px;top:889px" width="23" height="23" viewBox="0 0 23 23"><g fill="none" stroke="#82848e" stroke-width="1.6" stroke-linejoin="round"><path d="M5.2 7.3 V3.2 a1.6 1.6 0 0 1 1.6-1.6 H15.2 a1.6 1.6 0 0 1 1.6 1.6 V7.3"/><path d="M5.2 17.4 H3 a1.6 1.6 0 0 1-1.6-1.6 V8.9 a1.6 1.6 0 0 1 1.6-1.6 H19 a1.6 1.6 0 0 1 1.6 1.6 V15.8 a1.6 1.6 0 0 1-1.6 1.6 H16.8"/><path d="M5.2 13 H16.8 V19.9 a1.6 1.6 0 0 1-1.6 1.6 H6.8 a1.6 1.6 0 0 1-1.6-1.6 Z"/></g></svg>
<div class="t" style="left:884.00px;top:886px;font-size:14.6px;line-height:30px;font-weight:bold;color:#82848e;letter-spacing:1.000px;">In</div>
<svg style="position:absolute;left:915.7px;top:896.55px" width="9" height="5.5" viewBox="0 0 9 5.5"><path d="M0 0 H9 L4.5 5.5Z" fill="#82848e"/></svg>
<div style="position:absolute;left:942px;top:892px;width:2px;height:17px;background:#6a6c76"></div>
<svg style="position:absolute;left:961px;top:889px" width="21" height="24" viewBox="0 0 21 24"><g fill="none" stroke="#82848e" stroke-width="1.6" stroke-linejoin="round"><path d="M3.6 2 H12.6 L18.1 7.5 V20.2 a1.5 1.5 0 0 1-1.5 1.5 H3.6 a1.5 1.5 0 0 1-1.5-1.5 V3.5 a1.5 1.5 0 0 1 1.5-1.5Z"/><path d="M12.6 2 V7.5 H18.1" fill="#82848e"/><path d="M5.3 8.6 H8.3 M5.3 12.6 H14.8 M5.3 16.5 H14.8"/></g></svg>
<div class="t" style="left:990.50px;top:886px;font-size:14.6px;line-height:30px;font-weight:bold;color:#82848e;letter-spacing:0.050px;">Duyệt</div>
<div style="position:absolute;left:1056px;top:892px;width:2px;height:17px;background:#6a6c76"></div>
<svg style="position:absolute;left:1074px;top:889px" width="24" height="24" viewBox="0 0 24 24"><g fill="none" stroke="#82848e" stroke-width="1.6" stroke-linejoin="round" stroke-linecap="round"><path d="M2.3 6.1 H22.6"/><path d="M7.6 6.1 V3.4 a2 2 0 0 1 2-2 H15.2 a2 2 0 0 1 2 2 V6.1"/><path d="M4.8 8.6 L5.9 20.5 a1.3 1.3 0 0 0 1.3 1.2 H17.8 a1.3 1.3 0 0 0 1.3-1.2 L20.2 8.6"/><path d="M10.1 11.2 V17.9 M14.4 11.2 V17.9"/></g></svg>
<div class="t" style="left:1108.30px;top:886px;font-size:14.6px;line-height:30px;font-weight:bold;color:#82848e;letter-spacing:-0.650px;">Xóa</div>
<div style="position:absolute;left:1597px;top:883px;width:87px;height:35px;border:1.5px solid #e8e8ea;border-radius:5px;box-sizing:border-box"></div>
<div class="t" style="left:1622.50px;top:886px;font-size:14.6px;line-height:30px;font-weight:bold;color:#fff;letter-spacing:0.167px;">Hoãn</div>
<div style="position:absolute;left:1687px;top:874px;width:101px;height:48px;border:3px solid #fd3a3a;box-sizing:border-box"></div>
<div style="position:absolute;left:1695px;top:883px;width:87px;height:35px;background:#5c60ec;border-radius:5px"></div>
<div class="t" style="left:1728.20px;top:886px;font-size:14.6px;line-height:30px;font-weight:bold;color:#fff;letter-spacing:-0.850px;">Cất</div>
</body></html>
